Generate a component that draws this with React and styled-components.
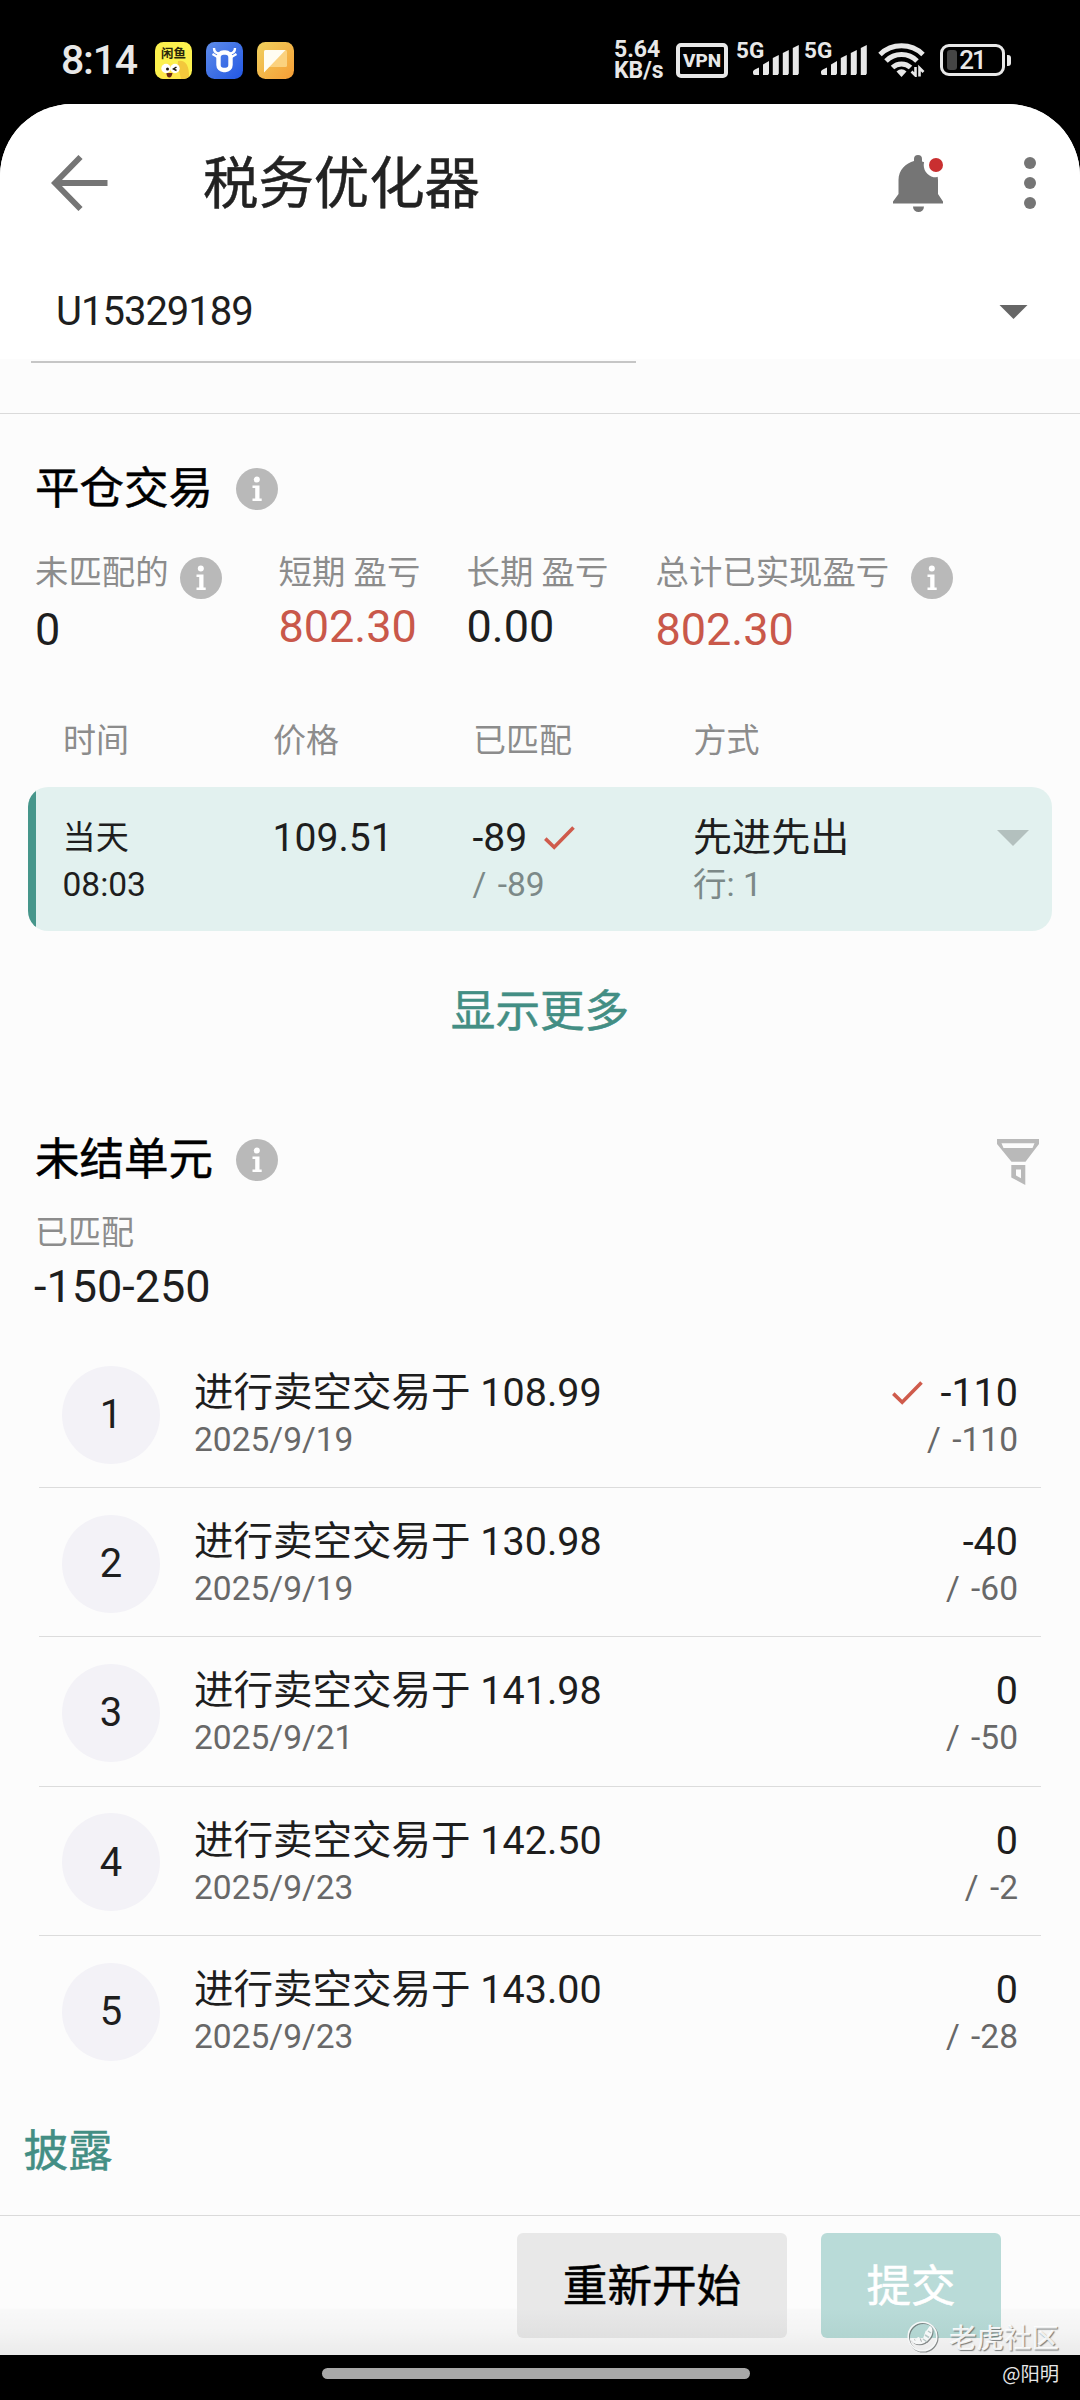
import React from "react";
import styled, { createGlobalStyle, css } from "styled-components";

const sans = `Roboto, "Noto Sans CJK SC", sans-serif`;

const GlobalStyle = createGlobalStyle`
  *, *::before, *::after { box-sizing: border-box; }
  body { margin: 0; background: #000; font-family: ${sans}; color: #1e1e1e; }
  svg { display: block; flex: none; }
`;

const semiBold = css`
  font-weight: 400;
  -webkit-text-stroke: 0.5px currentColor;
`;

const Screen = styled.div`
  width: 1080px;
  height: 2400px;
  display: flex;
  flex-direction: column;
  background: #000;
  overflow: hidden;
`;

/* ---------- status bar ---------- */
const StatusBar = styled.div`
  height: 104px;
  flex: none;
  display: flex;
  align-items: flex-start;
  justify-content: space-between;
  padding: 41px 68px 0 61px;
  color: #e8e8e8;
`;
const StatusGroup = styled.div`
  display: flex;
  align-items: flex-start;
`;
const Clock = styled.div`
  width: 94px;
  font-size: 41px;
  line-height: 38px;
  font-weight: 500;
  letter-spacing: -1.2px;
`;
const AppIcons = styled.div`
  display: flex;
  gap: 14px;
  padding-top: 1px;
`;
const NetSpeed = styled.div`
  width: 62px;
  font-size: 23px;
  line-height: 21px;
  font-weight: 700;
  margin-top: -2px;
  white-space: pre-line;
`;
const Vpn = styled.div`
  width: 52px;
  height: 35px;
  margin: 2px 8px 0 0;
  border: 4px solid #e8e8e8;
  border-radius: 5px;
  display: flex;
  align-items: center;
  justify-content: center;
  font-size: 19px;
  font-weight: 800;
  line-height: 1;
`;
const Signal = styled.div`
  display: flex;
  width: 68px;
  align-items: flex-start;
`;
const SignalType = styled.span`
  width: 17px;
  font-size: 22.5px;
  font-weight: 700;
  line-height: 20px;
  margin-top: -1px;
`;
const Battery = styled.div`
  position: relative;
  width: 65px;
  height: 32px;
  margin: 3px 7px 0 14px;
  border: 3px solid #e8e8e8;
  border-radius: 9px;
  display: flex;
  align-items: center;
  justify-content: center;
  padding-right: 1px;
  font-size: 26px;
  font-weight: 500;
  line-height: 1;
  letter-spacing: -2px;
  &::before {
    content: "";
    position: absolute;
    left: 4px;
    top: 3px;
    width: 10px;
    height: 20px;
    border-radius: 3px;
    background: #454545;
  }
  &::after {
    content: "";
    position: absolute;
    right: -9px;
    top: 8px;
    width: 4px;
    height: 11px;
    border-radius: 0 3px 3px 0;
    background: #e8e8e8;
  }
  span { position: relative; }
`;

/* ---------- page ---------- */
const Page = styled.main`
  height: 2251px;
  flex: none;
  display: flex;
  flex-direction: column;
  background: #fcfcfc;
  border-radius: 72px 72px 0 0;
  overflow: hidden;
`;
const Header = styled.header`
  height: 157px;
  flex: none;
  display: flex;
  align-items: center;
  padding: 0 43px 0 51px;
  background: #fff;
`;
const Title = styled.h1`
  flex: 1;
  margin: 4px 0 0 94px;
  font-size: 55.4px;
  line-height: 64px;
  ${semiBold}
  color: #222;
`;
const HeaderActions = styled.div`
  display: flex;
  align-items: center;
  gap: 79px;
`;
const AccountSelect = styled.div`
  height: 98px;
  flex: none;
  display: flex;
  align-items: center;
  justify-content: space-between;
  padding: 3px 52px 0 56px;
  background: #fff;
  font-size: 40px;
  line-height: 95px;
  letter-spacing: -1px;
`;
const AccountRule = styled.div`
  height: 55px;
  flex: none;
  border-bottom: 1px solid #dadada;
  &::before {
    content: "";
    display: block;
    width: 605px;
    height: 2px;
    margin: 2px 0 0 31px;
    background: #c6c6c6;
  }
`;
const SectionHead = styled.div`
  display: flex;
  align-items: center;
  height: 56px;
  flex: none;
  padding: 0 41px 0 35px;
  margin-top: ${(p) => p.$top}px;
`;
const SectionTitle = styled.h2`
  margin: 0;
  width: 201px;
  font-size: 44.5px;
  line-height: 56px;
  ${semiBold}
  color: #000;
`;
const Spacer = styled.div`
  flex: 1;
`;
const Label = styled.span`
  font-size: 33.4px;
  line-height: 40px;
  color: #8c8c8c;
  white-space: pre;
`;
const Value = styled.span`
  font-size: 45px;
  line-height: 52px;
  color: ${(p) => (p.$gain ? "#c9584a" : "#1e1e1e")};
`;
const Stats = styled.div`
  display: grid;
  grid-template-columns: 243.5px 188px 189px auto;
  height: 110px;
  flex: none;
  margin-top: 33px;
  padding-left: 35px;
`;
const Stat = styled.div`
  display: flex;
  flex-direction: column;
  gap: ${(p) => (p.$info ? 3 : 0)}px;
`;
const StatLabel = styled.div`
  display: flex;
  height: 51px;
  gap: ${(p) => p.$gap || 0}px;
  ${Label} { margin-top: 3px; }
  svg { margin-top: 7px; }
`;
const columns = css`
  display: grid;
  grid-template-columns: 210px 200px 220.5px 1fr auto;
`;
const TableHead = styled.div`
  ${columns}
  height: 42px;
  flex: none;
  margin-top: 58px;
  padding: 3px 0 0 63px;
  ${Label} { font-size: 33px; }
`;
const TradeCard = styled.div`
  ${columns}
  height: 144px;
  flex: none;
  margin: 27px 28px 0;
  padding: 26px 23px 0 34.5px;
  border-radius: 20px;
  background: linear-gradient(90deg, #46968b 8px, #e2f1ef 8px);
`;
const Cell = styled.div`
  display: flex;
  flex-direction: column;
`;
const Main = styled.div`
  display: flex;
  align-items: center;
  justify-content: ${(p) => (p.$end ? "flex-end" : "flex-start")};
  height: 50px;
  gap: ${(p) => p.$gap || 17}px;
  font-size: ${(p) => p.$size || 39.5}px;
  line-height: 50px;
  white-space: pre;
`;
const Sub = styled.div`
  height: 44px;
  font-size: 33.5px;
  line-height: 44px;
  white-space: pre;
  word-spacing: ${(p) => (p.$wide ? 3 : 0)}px;
  text-align: ${(p) => (p.$end ? "right" : "left")};
  color: ${(p) => p.$color || "#7c8988"};
`;
const LinkButton = styled.button`
  align-self: ${(p) => (p.$center ? "center" : "flex-start")};
  height: 56px;
  flex: none;
  padding: 0;
  margin: ${(p) => p.$margin};
  border: 0;
  background: none;
  font: 400 44.6px/56px ${sans};
  ${semiBold}
  color: #438e84;
`;
const FilterButton = styled.button`
  margin: 3px 0 0;
  padding: 0;
  border: 0;
  background: none;
`;
const Matched = styled.div`
  display: flex;
  flex-direction: column;
  height: 128px;
  flex: none;
  margin: 23px 0 0 35px;
  ${Label} { font-size: 33px; line-height: 44px; }
  ${Value} { margin: 6px 0 0 -1px; }
`;
const Lots = styled.div`
  flex: none;
  margin: 0 39px;
`;
const Lot = styled.div`
  height: 149.2px;
  display: flex;
  align-items: center;
  padding: 0 23px 0 23px;
  border-bottom: ${(p) => (p.$last ? 0 : 1)}px solid #dcdcdc;
`;
const LotIndex = styled.div`
  width: 98px;
  height: 98px;
  margin-top: 3px;
  border-radius: 50%;
  background: #f3f2f7;
  display: flex;
  align-items: center;
  justify-content: center;
  font-size: 40px;
`;
const LotText = styled.div`
  flex: 1;
  margin: 4px 0 0 34px;
`;
const LotAmount = styled.div`
  margin-top: 4px;
`;
const Footer = styled.footer`
  flex: 1;
  display: flex;
  align-items: flex-start;
  justify-content: flex-end;
  gap: 34px;
  padding: 17px 79px 0 0;
  border-top: 1px solid #dadada;
  background: linear-gradient(180deg, transparent 92px, rgba(0, 0, 0, 0.015) 94px, rgba(0, 0, 0, 0.03) 115px, rgba(0, 0, 0, 0.07) 140px);
`;
const Button = styled.button`
  width: ${(p) => (p.$primary ? 180 : 270)}px;
  height: 105px;
  padding: 3px 0 0;
  border: 0;
  border-radius: 6px;
  font: 400 44.6px/102px ${sans};
  ${semiBold}
  color: ${(p) => (p.$primary ? "#fff" : "#000")};
  background: ${(p) =>
    p.$primary
      ? "linear-gradient(180deg, #b9dbd8 72%, #b1d4d0)"
      : "linear-gradient(180deg, #e8e8e8 72%, #e0e0e0)"};
`;

/* ---------- system nav ---------- */
const NavBar = styled.div`
  flex: 1;
  display: grid;
  grid-template-columns: 322px 428px 1fr;
  position: relative;
`;
const HomePill = styled.div`
  grid-column: 2;
  height: 11px;
  margin-top: 13px;
  border-radius: 6px;
  background: #a8a8a8;
`;
const Author = styled.div`
  margin: 4px 21px 0 0;
  text-align: right;
  font: 400 19.3px/28px "Noto Sans CJK SC", sans-serif;
  color: #e6e6e6;
`;
const Watermark = styled.div`
  position: absolute;
  right: 21px;
  top: -41px;
  height: 44px;
  display: flex;
  align-items: center;
  gap: 11px;
  font: 500 27.5px/44px "Noto Sans CJK SC", sans-serif;
  color: rgba(255, 255, 255, 0.88);
  text-shadow: 1px 1px 1px rgba(100, 105, 105, 0.85);
  svg { filter: drop-shadow(1px 1px 0.7px rgba(100, 105, 105, 0.75)); }
`;

const Info = () => (
  <svg width="42" height="42" viewBox="0 0 42 42">
    <circle cx="21" cy="21" r="21" fill="#b9b9b9" />
    <circle cx="20.8" cy="11.6" r="3" fill="#fff" />
    <path d="M16.5 17.5h7v13h2.2v2.6h-9.2v-2.6h2.7V20h-2.7z" fill="#fff" />
  </svg>
);
const Check = () => (
  <svg width="31" height="24" viewBox="0 0 31 24">
    <path d="M1.3 12.6 10.2 21.3 29.5 1.5" fill="none" stroke="#cf5b4c" strokeWidth="3.6" />
  </svg>
);
const Caret = ({ w, h, color }) => (
  <svg width={w} height={h} viewBox="0 0 30 15">
    <path d="M0 0h30L15 15z" fill={color} />
  </svg>
);
const Filter = () => (
  <svg width="42" height="46" viewBox="0 0 42 46">
    <path fillRule="evenodd" d="M0 0h42v5L28.5 22.7h-14L0 5zM4.5 4.3l2 4.7h29l2-4.7z" fill="#b9b9b9" />
    <path fillRule="evenodd" d="M14.3 26h14v20l-14-7.5zM19 30.5v6l5 2.8v-8.8z" fill="#b9b9b9" />
  </svg>
);
const Back = () => (
  <svg width="58" height="56" viewBox="0 0 58 56" fill="none" stroke="#757575" strokeWidth="5.8">
    <path d="M29.5 2 4 28l25.5 26M4 28h52.5" />
  </svg>
);
const Bell = () => (
  <svg width="51" height="58" viewBox="0 0 51 58">
    <path d="M21 5a4 4 0 0 1 8 0v2.5C37 10 45 16 45 26v14l5 7.5v2H0v-2L5.5 40V26C5.5 16 13 9 21 7z" fill="#757575" />
    <path d="M20 52.5h11a5.5 5.5 0 0 1-11 0z" fill="#757575" />
    <circle cx="43" cy="11" r="12.3" fill="#fff" />
    <circle cx="43" cy="11" r="7" fill="#c92f30" />
  </svg>
);
const More = () => (
  <svg width="14" height="54" viewBox="0 0 14 54" fill="#757575">
    <circle cx="7" cy="7" r="6" />
    <circle cx="7" cy="27" r="6" />
    <circle cx="7" cy="47" r="6" />
  </svg>
);
const SignalBars = styled.svg`
  margin-top: 4px;
`;
const Bars = () => (
  <SignalBars width="46" height="30" viewBox="0 0 46 30" fill="#e8e8e8">
    <path d="M0 26.500q0-1.500 6-4V30H1.500Q0 30 0 28zM10 19.500l6-3.500v12.500l-1 1.500h-5zM19.800 13l6-3v18.500l-1 1.500h-5zM29.800 8l6-3v23.500l-1 1.500h-5zM39.800 3l6-3v28.500l-1 1.500h-5z" />
  </SignalBars>
);
const WifiIcon = styled.svg`
  margin-left: 6px;
`;
const Wifi = () => (
  <WifiIcon width="48" height="36" viewBox="0 0 48 36" fill="none" stroke="#e8e8e8" strokeWidth="5">
    <path d="M2 13.500a31 31 0 0 1 43 0M8 20a22 22 0 0 1 31 0M14.500 26.500a13 13 0 0 1 18 0" />
    <path d="M18.500 30.500q5-4.500 10 0L23.500 36z" fill="#e8e8e8" stroke="none" />
    <path d="M37.500 26v8.500l-4-4M41.500 35.500V27l4 4" strokeWidth="2.6" />
  </WifiIcon>
);
const FishIcon = () => (
  <svg width="37" height="37" viewBox="0 0 37 37">
    <defs>
      <clipPath id="fish"><rect width="37" height="37" rx="8.5" /></clipPath>
    </defs>
    <g clipPath="url(#fish)">
      <rect width="37" height="37" fill="#fcf14e" />
      <path d="M23 19q12-2 11 19H22z" fill="#f3c83c" />
      <path d="M5 38q-2-16 9-17 10 0 12 17z" fill="#ffe84a" />
      <circle cx="11" cy="26.5" r="4.7" fill="#fff" />
      <circle cx="20" cy="26.5" r="4.7" fill="#fff" />
      <circle cx="12.5" cy="27" r="1.5" fill="#221c10" />
      <path d="m21.500 25-3 2 3 1.500" fill="none" stroke="#221c10" strokeWidth="1.5" />
      <path d="M11.500 31h6q-1 5-3.500 4.500T11.500 31z" fill="#6e2917" />
    </g>
    <text x="18.5" y="16" textAnchor="middle" fontFamily="Noto Sans CJK SC" fontWeight="700" fontSize="12.5" fill="#29270a">闲鱼</text>
  </svg>
);
const BullIcon = () => (
  <svg width="37" height="37" viewBox="0 0 37 37">
    <defs>
      <linearGradient id="bull" x1="0" y1="0" x2="1" y2="1">
        <stop offset="0" stopColor="#5f8ce8" />
        <stop offset="1" stopColor="#2257e4" />
      </linearGradient>
    </defs>
    <rect width="37" height="37" rx="8.5" fill="url(#bull)" />
    <path d="M8 6q0 5 5 5.500M29 6q0 5-5 5.500" fill="none" stroke="#fff" strokeWidth="2.4" />
    <path d="m6.500 12 5 3M30.500 12l-5 3" stroke="#fff" strokeWidth="2.2" />
    <rect x="12.500" y="10.500" width="12" height="17.500" rx="5" fill="none" stroke="#fff" strokeWidth="4.4" />
  </svg>
);
const NoteIcon = () => (
  <svg width="37" height="37" viewBox="0 0 37 37">
    <defs>
      <linearGradient id="note" x1="0" y1="0" x2="1" y2="1">
        <stop offset="0" stopColor="#f0d15e" />
        <stop offset="1" stopColor="#f69d35" />
      </linearGradient>
    </defs>
    <rect width="37" height="37" rx="8.5" fill="url(#note)" />
    <rect x="7" y="8" width="23" height="17" rx="1.5" fill="#fbd27f" />
    <path d="M8.500 8h20L7 30.500V9.500Q7 8 8.500 8z" fill="#fffdf2" />
  </svg>
);
const TigerMark = () => (
  <svg width="31" height="31" viewBox="0 0 31 31" fill="none" stroke="#f6f8f8" strokeWidth="1.5">
    <circle cx="15.5" cy="15.5" r="14.3" />
    <path d="M4 18.500q2-2 3 1t3-1 3 1.500 4-3 2-6 4-5q2.500 1 1.500 6t-7 9q-6 3-11 0z" fill="#f6f8f8" />
    <path d="m18 14 4 2.500M16 18l3.500 2.500M21 10l3 2" stroke="#b9c9c7" />
  </svg>
);

const lots = [
  { price: "108.99", date: "2025/9/19", qty: "-110", total: "-110", done: true },
  { price: "130.98", date: "2025/9/19", qty: "-40", total: "-60" },
  { price: "141.98", date: "2025/9/21", qty: "0", total: "-50" },
  { price: "142.50", date: "2025/9/23", qty: "0", total: "-2" },
  { price: "143.00", date: "2025/9/23", qty: "0", total: "-28" },
];

export default function App() {
  return (
    <Screen>
      <GlobalStyle />
      <StatusBar>
        <StatusGroup>
          <Clock>8:14</Clock>
          <AppIcons>
            <FishIcon />
            <BullIcon />
            <NoteIcon />
          </AppIcons>
        </StatusGroup>
        <StatusGroup>
          <NetSpeed>{"5.64\nKB/s"}</NetSpeed>
          <Vpn>VPN</Vpn>
          <Signal><SignalType>5G</SignalType><Bars /></Signal>
          <Signal><SignalType>5G</SignalType><Bars /></Signal>
          <Wifi />
          <Battery><span>21</span></Battery>
        </StatusGroup>
      </StatusBar>

      <Page>
        <Header>
          <Back />
          <Title>税务优化器</Title>
          <HeaderActions>
            <Bell />
            <More />
          </HeaderActions>
        </Header>
        <AccountSelect>
          U15329189
          <Caret w={29} h={14} color="#666" />
        </AccountSelect>
        <AccountRule />

        <SectionHead $top={47}>
          <SectionTitle>平仓交易</SectionTitle>
          <Info />
        </SectionHead>
        <Stats>
          <Stat $info>
            <StatLabel $gap={11}><Label>未匹配的</Label><Info /></StatLabel>
            <Value>0</Value>
          </Stat>
          <Stat>
            <StatLabel><Label>短期 盈亏</Label></StatLabel>
            <Value $gain>802.30</Value>
          </Stat>
          <Stat>
            <StatLabel><Label>长期 盈亏</Label></StatLabel>
            <Value>0.00</Value>
          </Stat>
          <Stat $info>
            <StatLabel $gap={22}><Label>总计已实现盈亏</Label><Info /></StatLabel>
            <Value $gain>802.30</Value>
          </Stat>
        </Stats>

        <TableHead>
          <Label>时间</Label>
          <Label>价格</Label>
          <Label>已匹配</Label>
          <Label>方式</Label>
        </TableHead>
        <TradeCard>
          <Cell>
            <Main $size={33.2}>当天</Main>
            <Sub $color="#1e1e1e">08:03</Sub>
          </Cell>
          <Cell><Main $size={39.1}>109.51</Main></Cell>
          <Cell>
            <Main $size={39.1}>-89<Check /></Main>
            <Sub $wide>/ -89</Sub>
          </Cell>
          <Cell>
            <Main $size={39.1}>先进先出</Main>
            <Sub>行: 1</Sub>
          </Cell>
          <Cell><Main><Caret w={32} h={16} color="#b3c0be" /></Main></Cell>
        </TradeCard>
        <LinkButton $center $margin="53px 0 0">显示更多</LinkButton>

        <SectionHead $top={92}>
          <SectionTitle>未结单元</SectionTitle>
          <Info />
          <Spacer />
          <FilterButton><Filter /></FilterButton>
        </SectionHead>
        <Matched>
          <Label>已匹配</Label>
          <Value>-150-250</Value>
        </Matched>
        <Lots>
          {lots.map((lot, i) => (
            <Lot key={i} $last={i === lots.length - 1}>
              <LotIndex>{i + 1}</LotIndex>
              <LotText>
                <Main>进行卖空交易于 {lot.price}</Main>
                <Sub $color="#686868">{lot.date}</Sub>
              </LotText>
              <LotAmount>
                <Main $end>{lot.done && <Check />}{lot.qty}</Main>
                <Sub $end $wide $color="#686868">/ {lot.total}</Sub>
              </LotAmount>
            </Lot>
          ))}
        </Lots>
        <LinkButton $margin="39px 0 35px 23.5px">披露</LinkButton>

        <Footer>
          <Button>重新开始</Button>
          <Button $primary>提交</Button>
        </Footer>
      </Page>

      <NavBar>
        <HomePill />
        <Author>@阳明</Author>
        <Watermark><TigerMark />老虎社区</Watermark>
      </NavBar>
    </Screen>
  );
}
